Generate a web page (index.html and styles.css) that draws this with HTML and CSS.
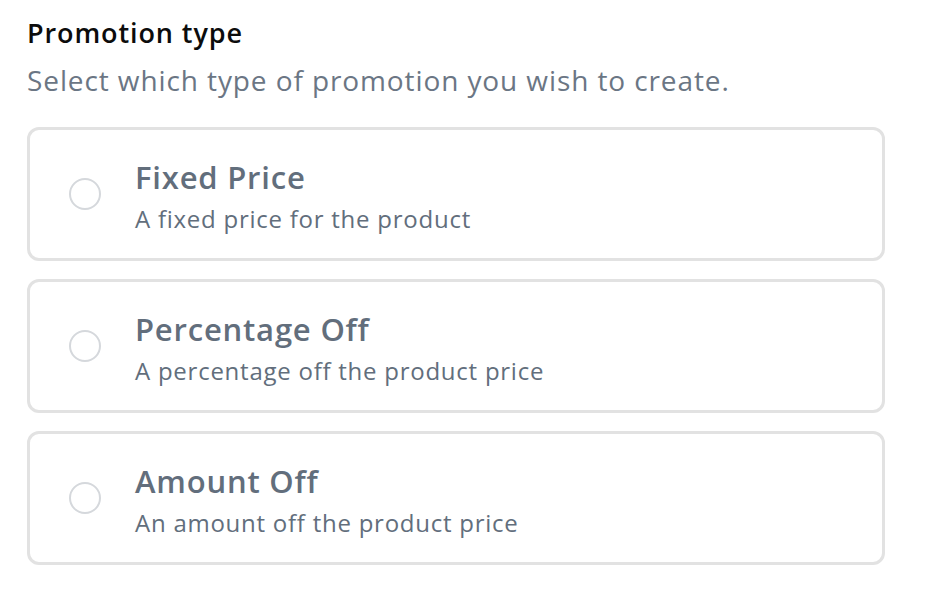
FILE: index.html
```html
<!DOCTYPE html>
<html lang="en">
<head>
  <meta charset="UTF-8" />
  <title>Promotion type</title>
  <link rel="stylesheet" href="styles.css">
</head>
<body>
  <div class="promo">
    <h2 class="promo-title">Promotion type</h2>
    <p class="promo-hint">Select which type of promotion you wish to create.</p>

    <div class="options">
      <label class="option">
        <input type="radio" name="promo" value="fixed" />
        <span class="radio"></span>
        <span class="option-text">
          <span class="option-name">Fixed Price</span>
          <span class="option-desc">A fixed price for the product</span>
        </span>
      </label>
      <label class="option">
        <input type="radio" name="promo" value="percentage" />
        <span class="radio"></span>
        <span class="option-text">
          <span class="option-name">Percentage Off</span>
          <span class="option-desc">A percentage off the product price</span>
        </span>
      </label>
      <label class="option">
        <input type="radio" name="promo" value="amount" />
        <span class="radio"></span>
        <span class="option-text">
          <span class="option-name">Amount Off</span>
          <span class="option-desc">An amount off the product price</span>
        </span>
      </label>
    </div>
  </div>
</body>
</html>
```

FILE: styles.css
```css
body {
  font-family: 'Open Sans', sans-serif;
  background: #fff;
  color: #111;
  margin: 0;
  padding: 15px 27px;
}

.promo-title {
  margin: 0;
  font-size: 27px;
  font-weight: 600;
  letter-spacing: 0.9px;
  line-height: 36px;
  color: #0c0c0c;
}

.promo-hint {
  margin: 10px 0 0;
  font-size: 28px;
  letter-spacing: 0.9px;
  line-height: 38px;
  color: #6b7684;
}

.options {
  display: flex;
  flex-direction: column;
  gap: 18px;
  margin-top: 28px;
  width: 858px;
}

.option {
  display: flex;
  align-items: center;
  height: 134px;
  box-sizing: border-box;
  border: 3px solid #e2e2e2;
  border-radius: 12px;
  padding: 0 0 0 39px;
  cursor: pointer;
}

.option input {
  display: none;
}

.radio {
  width: 32px;
  height: 32px;
  box-sizing: border-box;
  border: 2px solid #d5d8dc;
  border-radius: 50%;
  flex-shrink: 0;
  margin-right: 34px;
}

.option input:checked + .radio {
  border: 9px solid #5e6a78;
}

.option-text {
  display: flex;
  flex-direction: column;
  padding-top: 5px;
}

.option-name {
  font-size: 31px;
  font-weight: 600;
  letter-spacing: 0.8px;
  line-height: 40px;
  color: #626e7c;
}

.option-desc {
  margin-top: 5px;
  font-size: 24px;
  letter-spacing: 0.75px;
  line-height: 34px;
  color: #626e7c;
}
```
